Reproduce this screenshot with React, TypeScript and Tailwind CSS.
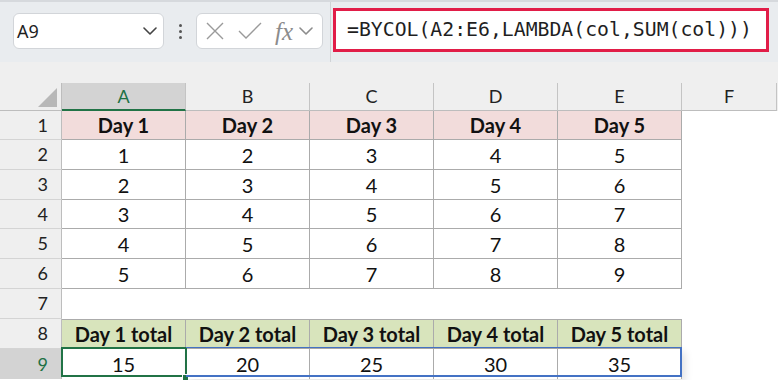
const heights = [29, 30, 30, 29, 30, 30, 30, 30, 30];
const letters = ["A", "B", "C", "D", "E"];
const body = [
  [1, 2, 3, 4, 5],
  [2, 3, 4, 5, 6],
  [3, 4, 5, 6, 7],
  [4, 5, 6, 7, 8],
  [5, 6, 7, 8, 9],
];
const totals = [15, 20, 25, 30, 35];

function Chevron({ color = "#444" }: { color?: string }) {
  return (
    <svg width="14" height="8" viewBox="0 0 14 8" fill="none">
      <path d="M1 1l6 6 6-6" stroke={color} strokeWidth="1.6" strokeLinecap="round" strokeLinejoin="round" />
    </svg>
  );
}

function Toolbar() {
  return (
    <div className="h-[62px] bg-[#e9ecef] border-t-2 border-[#d6d9dd] flex items-center font-['Noto_Sans',sans-serif]">
      <div className="ml-[13px] w-[151px] h-[36px] mt-[-2px] bg-white border border-[#d2d5d9] rounded-[6px] flex items-center pl-[3px] pr-[6px]">
        <span className="text-[18px] text-[#1f1f1f] flex-1">A9</span>
        <Chevron />
      </div>
      <div className="w-[32px] flex flex-col items-center gap-[3px] mt-[-2px]">
        <span className="w-[3px] h-[3px] rounded-full bg-[#555]" />
        <span className="w-[3px] h-[3px] rounded-full bg-[#555]" />
        <span className="w-[3px] h-[3px] rounded-full bg-[#555]" />
      </div>
      <div className="w-[127px] h-[36px] mt-[-2px] bg-white border border-[#d2d5d9] rounded-[6px] flex items-center pl-[9px]">
        <svg width="18" height="18" viewBox="0 0 18 18" fill="none">
          <path d="M1 1l16 16M17 1L1 17" stroke="#9a9a9a" strokeWidth="1.4" />
        </svg>
        <svg className="ml-[14px]" width="24" height="18" viewBox="0 0 24 18" fill="none">
          <path d="M1 9l7 7L23 1" stroke="#9a9a9a" strokeWidth="1.4" />
        </svg>
        <span className="ml-[13px] text-[25px] leading-none italic text-[#8c8c8c] font-['Liberation_Serif',serif]">fx</span>
        <span className="ml-[6px]">
          <Chevron color="#8c8c8c" />
        </span>
      </div>
      <div className="w-px h-full bg-[#d0d3d6] ml-[7px]" />
      <div className="ml-[2px] w-[436px] h-[44px] mt-[-4px] bg-white border-[3px] border-[#e11d48] flex items-center pl-[11px]">
        <span className="text-[19.8px] text-[#1f1f1f] font-['DejaVu_Sans_Mono',monospace]">
          =BYCOL(A2:E6,LAMBDA(col,SUM(col)))
        </span>
      </div>
    </div>
  );
}

function HeaderRow() {
  return (
    <div className="h-[28px] flex bg-[#efefef] text-[18px] text-[#222]">
      <div className="w-[62px] border-r border-b border-[#bdbdbd] flex items-end justify-end pr-[4px] pb-[3px]">
        <svg width="19" height="19" viewBox="0 0 19 19">
          <path d="M19 0V19H0Z" fill="#b8b8b8" />
        </svg>
      </div>
      {letters.map((l, i) => (
        <div
          key={l}
          className={
            i === 0
              ? "w-[124px] bg-[#d3d3d3] text-[#1e7145] border-r border-[#c4c4c4] border-b-2 border-b-[#217346] flex items-center justify-center"
              : "w-[124px] border-r border-b border-[#c4c4c4] border-b-[#bdbdbd] flex items-center justify-center"
          }
        >
          {l}
        </div>
      ))}
      <div className="w-[95px] border-r border-b border-[#c4c4c4] border-b-[#bdbdbd] flex items-center justify-center">F</div>
    </div>
  );
}

function RowHead({ n, h }: { n: number; h: number }) {
  const sel = n === 9;
  return (
    <div
      style={{ height: h }}
      className={
        sel
          ? "w-[62px] shrink-0 bg-[#d3d3d3] text-[#1e7145] border-r border-[#bdbdbd] flex items-center justify-end pr-[13px] text-[18px]"
          : "w-[62px] shrink-0 bg-[#efefef] text-[#222] border-r border-b border-[#bdbdbd] border-b-[#d4d4d4] flex items-center justify-end pr-[13px] text-[18px]"
      }
    >
      {n}
    </div>
  );
}

export default function App() {
  return (
    <div className="w-[778px] h-[380px] overflow-hidden bg-white font-['Lato',sans-serif]">
      <Toolbar />
      <div className="h-[21px] bg-[#efefef]" />
      <HeaderRow />
      <div className="flex" style={{ height: heights[0] }}>
        <RowHead n={1} h={heights[0]} />
        {letters.map((l, i) => (
          <div key={l} className="w-[124px] bg-[#f2dcdb] border-r border-b border-[#ababab] flex items-center justify-center font-bold text-[20px] text-[#111]">
            Day {i + 1}
          </div>
        ))}
      </div>
      {body.map((row, r) => (
        <div key={r} className="flex" style={{ height: heights[r + 1] }}>
          <RowHead n={r + 2} h={heights[r + 1]} />
          {row.map((v, i) => (
            <div key={i} className="w-[124px] border-r border-b border-[#ababab] flex items-center justify-center text-[20px] text-[#111]">
              {v}
            </div>
          ))}
        </div>
      ))}
      <div className="flex" style={{ height: heights[6] }}>
        <RowHead n={7} h={heights[6]} />
      </div>
      <div className="flex" style={{ height: heights[7] }}>
        <RowHead n={8} h={heights[7]} />
        {letters.map((l, i) => (
          <div key={l} className="w-[124px] bg-[#d8e4bc] border-r border-t border-b border-[#ababab] flex items-center justify-center font-bold text-[20px] text-[#111]">
            Day {i + 1} total
          </div>
        ))}
      </div>
      <div className="flex" style={{ height: heights[8] }}>
        <RowHead n={9} h={heights[8]} />
        <div className="relative w-[124px] border-r border-[#ababab] flex items-center justify-center text-[20px] text-[#111]">
          {totals[0]}
          <div className="absolute -left-[1px] -top-[2px] w-[126px] h-[30px] border-2 border-[#217346]" />
          <div className="absolute -right-[4px] bottom-[-2px] w-[7px] h-[7px] bg-[#217346] border border-white" />
        </div>
        <div className="relative flex shadow-[3px_3px_8px_rgba(0,0,0,0.12)]">
          {totals.slice(1).map((v, i) => (
            <div key={i} className="w-[124px] border-r border-[#ababab] flex items-center justify-center text-[20px] text-[#111]">
              {v}
            </div>
          ))}
          <div className="absolute left-0 -top-[2px] right-0 bottom-[2px] border-t border-b-2 border-r-2 border-[#4472c4]" />
        </div>
      </div>
    </div>
  );
}
